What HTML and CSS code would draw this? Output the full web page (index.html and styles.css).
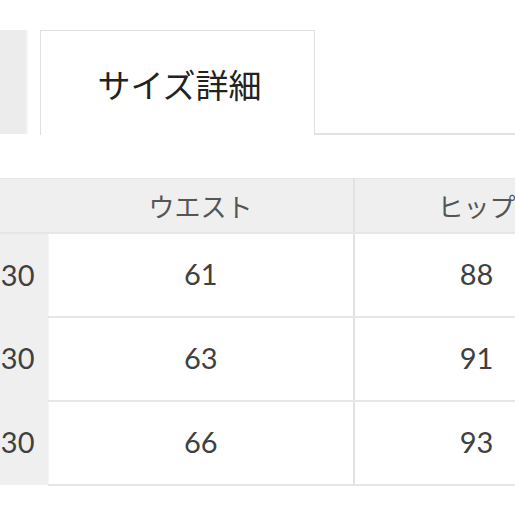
FILE: index.html
```html
<!DOCTYPE html>
<html lang="ja">
<head>
<meta charset="utf-8">
<link rel="stylesheet" href="styles.css">
</head>
<body>
<div class="frame">
<div class="tabs">
  <div class="tab tab-off"></div>
  <div class="tab tab-on">サイズ詳細</div>
  <div class="tab-fill"></div>
</div>
<div class="clip">
<table class="size">
  <colgroup>
    <col class="c-label">
    <col class="c-a">
    <col class="c-b">
  </colgroup>
  <thead>
    <tr><th></th><th class="h-a">ウエスト</th><th>ヒップ</th></tr>
  </thead>
  <tbody>
    <tr><td class="lbl">30</td><td class="a">61</td><td>88</td></tr>
    <tr><td class="lbl">30</td><td class="a">63</td><td>91</td></tr>
    <tr><td class="lbl">30</td><td class="a">66</td><td>93</td></tr>
  </tbody>
</table>
</div>
</div>
</body>
</html>
```
FILE: styles.css
```css
html, body {
  margin: 0;
  padding: 0;
  background: #fff;
}
body {
  font-family: "Noto Sans CJK JP", "Noto Sans", sans-serif;
  color: #333;
}
.frame {
  width: 515px;
  height: 515px;
  overflow: hidden;
}
.tabs {
  display: flex;
  padding-top: 30px;
  height: 105px;
}
.tab-off {
  width: 26px;
  background: #ececec;
  border-right: 2px solid #f4f4f4;
  margin-right: 12px;
  margin-bottom: 1px;
}
.tab-on {
  width: 275px;
  box-sizing: border-box;
  border: 1px solid #e0e0e0;
  border-bottom: none;
  background: #fff;
  display: flex;
  align-items: center;
  justify-content: center;
  font-size: 33px;
  color: #222;
  padding-top: 1px;
  padding-left: 4px;
}
.tab-fill {
  flex: 1;
  border-bottom: 2px solid #e2e2e2;
}
.clip {
  width: 515px;
  overflow: hidden;
  margin-top: 43px;
}
.size {
  border-collapse: collapse;
  table-layout: fixed;
  width: 598px;
  border-top: 1px solid #e6e6e6;
}
.c-label { width: 48px; }
.c-a { width: 306px; }
.c-b { width: 244px; }
.size th {
  height: 53px;
  background: #efefef;
  font-weight: normal;
  font-size: 26px;
  color: #555;
  padding: 0;
  text-align: center;
  border-bottom: 2px solid #e6e6e6;
}
.size th.h-a {
  border-right: 2px solid #e2e2e2;
}
.size td {
  height: 79px;
  padding: 0 0 3px 0;
  text-align: center;
  font-family: "Lato", "Noto Sans CJK JP", sans-serif;
  font-weight: 400;
  font-size: 29px;
  color: #404040;
  border-bottom: 2px solid #e6e6e6;
}
.size td.lbl {
  background: #efefef;
  text-align: right;
  padding-right: 13px;
  border-bottom: none;
  border-right: 1px solid #f6f6f6;
}
.size td.a {
  border-right: 2px solid #e2e2e2;
}
```
